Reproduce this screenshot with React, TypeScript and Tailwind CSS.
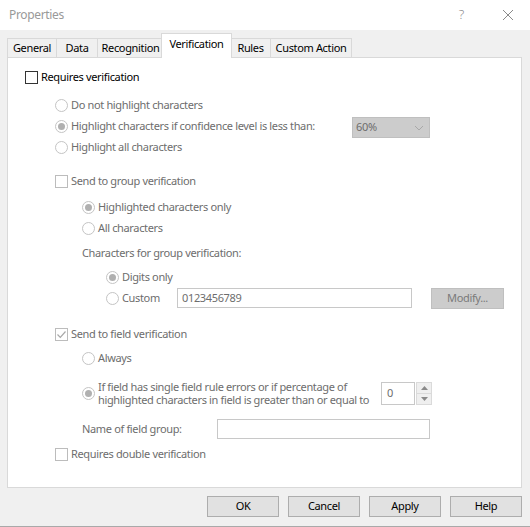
import React from 'react';

const TABS = [
  { label: 'General', w: 'w-[49px]' },
  { label: 'Data', w: 'w-[41px]' },
  { label: 'Recognition', w: 'w-[66px]' },
  { label: 'Verification', w: 'w-[67px]', active: true },
  { label: 'Rules', w: 'w-[40px]' },
  { label: 'Custom Action', w: 'w-[82px]' },
];

function CheckBox({ checked, disabled }: { checked?: boolean; disabled?: boolean }) {
  return (
    <span
      className={`flex h-[13px] w-[13px] shrink-0 items-center justify-center border bg-white ${
        disabled ? 'border-[#bcbcbc]' : 'border-[#333333]'
      }`}
    >
      {checked && (
        <svg width="11" height="11" viewBox="0 0 11 11">
          <path d="M1.5 5.5 L4.3 8.3 L9.5 2.5" fill="none" stroke="#a8a8a8" strokeWidth="1.2" />
        </svg>
      )}
    </span>
  );
}

function Radio({ checked }: { checked?: boolean }) {
  return (
    <span className="flex h-[13px] w-[13px] shrink-0 items-center justify-center rounded-full border border-[#c4c4c4] bg-white">
      {checked && <span className="h-[7px] w-[7px] rounded-full bg-[#b0b0b0]" />}
    </span>
  );
}

function Row({ children, className = '' }: { children: React.ReactNode; className?: string }) {
  return <div className={`flex h-[20px] items-center whitespace-nowrap ${className}`}>{children}</div>;
}

export default function App() {
  return (
    <div
      className="flex h-[527px] w-[530px] flex-col overflow-hidden border-b border-[#a9a9a9] bg-[#f0f0f0] text-[11px] tracking-[-0.35px] text-black"
      style={{ fontFamily: '"Noto Sans", "Open Sans", sans-serif' }}
    >
      {/* title bar */}
      <div className="flex h-[30px] shrink-0 items-center bg-white pl-[9px] pr-[16px] text-[#999999]">
        <span className="text-[12px]">Properties</span>
        <span className="ml-auto mr-[38px] text-[13px] font-light text-[#8a8a8a]">?</span>
        <svg width="12" height="12" viewBox="0 0 12 12">
          <path d="M1 1 L11 11 M11 1 L1 11" stroke="#8a8a8a" strokeWidth="1" />
        </svg>
      </div>

      <div className="flex flex-1 flex-col px-[7px] pt-[8px]">
        {/* tabs */}
        <div className="flex h-[19px] items-end whitespace-nowrap">
          {TABS.map((t) =>
            t.active ? (
              <div
                key={t.label}
                className={`relative z-10 -mx-[2px] -mb-[1px] box-content flex h-[22px] items-start justify-center border border-b-0 border-[#d9d9d9] bg-white px-[1px] pt-[2px] ${t.w}`}
              >
                {t.label}
              </div>
            ) : (
              <div
                key={t.label}
                className={`flex h-[19px] items-center justify-center border border-r-0 border-b-0 border-[#d9d9d9] last:border-r ${t.w}`}
              >
                {t.label}
              </div>
            )
          )}
        </div>

        {/* panel */}
        <div className="flex h-[431px] w-[515px] flex-col border border-[#d9d9d9] bg-white pl-[17px] pt-[9px] text-[#6d6d6d]">
          <Row className="gap-[3px] text-black">
            <CheckBox />
            <span>Requires verification</span>
          </Row>

          <div className="ml-[30px] mt-[8px] flex flex-col">
            <Row className="gap-[3px]">
              <Radio />
              <span>Do not highlight characters</span>
            </Row>
            <Row className="mt-[1px]">
              <Radio checked />
              <span className="ml-[3px] w-[278px]">Highlight characters if confidence level is less than:</span>
              <div className="ml-[3px] mt-[3px] flex h-[21px] w-[78px] items-center border border-[#bfbfbf] bg-[#cccccc] pl-[3px] pr-[5px] text-[#6d6d6d]">
                <span>60%</span>
                <svg className="ml-auto" width="10" height="6" viewBox="0 0 10 6">
                  <path d="M1 1 L5 5 L9 1" fill="none" stroke="#a8a8a8" strokeWidth="1" />
                </svg>
              </div>
            </Row>
            <Row className="mt-[1px] gap-[3px]">
              <Radio />
              <span>Highlight all characters</span>
            </Row>

            <Row className="mt-[14px] gap-[3px]">
              <CheckBox disabled />
              <span>Send to group verification</span>
            </Row>

            <div className="ml-[27px] mt-[6px] flex flex-col">
              <Row className="gap-[3px]">
                <Radio checked />
                <span>Highlighted characters only</span>
              </Row>
              <Row className="mt-[1px] gap-[3px]">
                <Radio />
                <span>All characters</span>
              </Row>
              <Row className="mt-[5px]">
                <span>Characters for group verification:</span>
              </Row>
              <div className="ml-[24px] mt-[4px] flex flex-col">
                <Row className="gap-[3px]">
                  <Radio checked />
                  <span>Digits only</span>
                </Row>
                <Row className="mt-[1px]">
                  <Radio />
                  <span className="ml-[3px] w-[55px]">Custom</span>
                  <div className="flex h-[20px] w-[235px] items-center border border-[#c8c8c8] bg-white pl-[4px]">
                    0123456789
                  </div>
                  <div className="ml-[19px] flex h-[21px] w-[73px] items-center justify-center border border-[#bfbfbf] bg-[#cccccc] text-[#7a7a7a]">
                    Modify...
                  </div>
                </Row>
              </div>
            </div>

            <Row className="mt-[16px] gap-[3px]">
              <CheckBox checked disabled />
              <span>Send to field verification</span>
            </Row>

            <div className="ml-[27px] mt-[4px] flex flex-col">
              <Row className="gap-[3px]">
                <Radio />
                <span>Always</span>
              </Row>
              <div className="mt-[12px] flex h-[26px] items-center">
                <Radio checked />
                <span className="ml-[3px] w-[280px] leading-[13px]">
                  If field has single field rule errors or if percentage of highlighted characters in field is greater than or equal to
                </span>
                <div className="ml-[3px] flex h-[23px] w-[34px] items-center border border-[#c8c8c8] bg-white pl-[5px]">0</div>
                <div className="ml-[1px] flex h-[23px] w-[16px] flex-col">
                  <div className="flex flex-1 items-center justify-center border border-[#dadada] bg-[#efefef]">
                    <svg width="7" height="4" viewBox="0 0 7 4">
                      <path d="M0 4 L3.5 0 L7 4 Z" fill="#8a8a8a" />
                    </svg>
                  </div>
                  <div className="flex flex-1 items-center justify-center border border-t-0 border-[#dadada] bg-[#efefef]">
                    <svg width="7" height="4" viewBox="0 0 7 4">
                      <path d="M0 0 L3.5 4 L7 0 Z" fill="#8a8a8a" />
                    </svg>
                  </div>
                </div>
              </div>
              <Row className="mt-[13px]">
                <span className="w-[135px]">Name of field group:</span>
                <div className="h-[20px] w-[213px] border border-[#c8c8c8] bg-white" />
              </Row>
            </div>

            <Row className="mt-[5px] gap-[3px]">
              <CheckBox disabled />
              <span>Requires double verification</span>
            </Row>
          </div>
        </div>

        {/* buttons */}
        <div className="mt-[8px] flex justify-end gap-[9px] pr-[1px]">
          {['OK', 'Cancel', 'Apply', 'Help'].map((b) => (
            <div
              key={b}
              className="flex h-[21px] w-[72px] items-center justify-center border border-[#adadad] bg-[#e1e1e1]"
            >
              {b}
            </div>
          ))}
        </div>
      </div>
    </div>
  );
}
